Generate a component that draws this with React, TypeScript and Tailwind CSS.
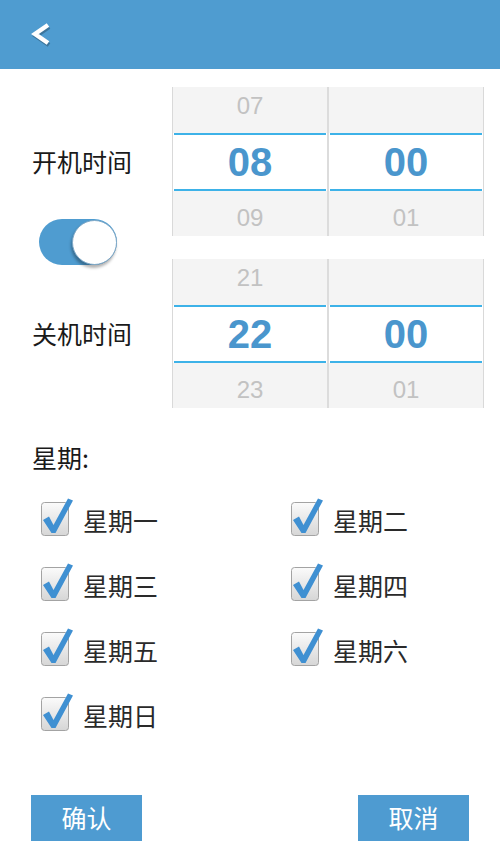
import { useState } from 'react';

const CJK = { fontFamily: '"Noto Sans CJK SC", "Noto Sans", sans-serif' };
const NUM = { fontFamily: '"Liberation Sans", Arial, sans-serif' };

const DAYS = ['星期一', '星期二', '星期三', '星期四', '星期五', '星期六', '星期日'];

const BackArrow = () => (
  <svg width="22" height="24" viewBox="0 0 22 24" className="drop-shadow-[1px_2px_0_rgba(0,0,0,0.25)]">
    <path d="M18 3 L5 12 L18 21" fill="none" stroke="#fff" strokeWidth="4.5" strokeLinejoin="miter" />
  </svg>
);

const CheckIcon = () => (
  <svg width="34" height="40" viewBox="0 0 34 40">
    <defs>
      <linearGradient id="box" x1="0" y1="0" x2="0" y2="1">
        <stop offset="0" stopColor="#fbfbfb" />
        <stop offset="1" stopColor="#d6d6d6" />
      </linearGradient>
    </defs>
    <rect x="1.5" y="5.5" width="27" height="33" rx="3" fill="url(#box)" stroke="#a3a3a3" />
    <path d="M3 23 L9 19.5 L13.5 28 L28 1.5 L33 3.5 L15.5 36 L11.5 36 Z" fill="#3f90d2" />
  </svg>
);

type ColumnProps = { top: string; mid: string; bottom: string };

const Column = ({ top, mid, bottom }: ColumnProps) => (
  <div className="flex flex-col flex-1">
    <div className="h-[46px] bg-[#f4f4f4] flex items-center justify-center pb-[8px] text-[24px] text-[#c2c2c2]" style={NUM}>
      {top}
    </div>
    <div className="h-[2px] bg-[#3db2e8] mx-px" />
    <div className="h-[54px] bg-white flex items-center justify-center text-[40px] font-bold text-[#4a96cd]" style={NUM}>
      {mid}
    </div>
    <div className="h-[2px] bg-[#3db2e8] mx-px" />
    <div className="h-[45px] bg-[#f4f4f4] flex items-center justify-center pt-[8px] text-[24px] text-[#c2c2c2]" style={NUM}>
      {bottom}
    </div>
  </div>
);

const Picker = ({ hour }: { hour: [string, string, string] }) => (
  <div className="flex w-[312px] border-x border-[#d9d9d9]">
    <Column top={hour[0]} mid={hour[1]} bottom={hour[2]} />
    <div className="w-[2px] bg-[#dcdcdc]" />
    <Column top="" mid="00" bottom="01" />
  </div>
);

export default function App() {
  const [on, setOn] = useState(true);

  return (
    <div className="w-[500px] h-[857px] bg-white flex flex-col overflow-hidden" style={CJK}>
      <header className="h-[69px] bg-[#4f9cd0] flex items-center pl-[30px] pb-[2px]">
        <BackArrow />
      </header>

      <section className="flex pt-[18px]">
        <div className="w-[172px] flex flex-col">
          <div className="h-[148px] flex items-center pl-[32px] text-[25px] text-[#1a1a1a] pt-[2px]">开机时间</div>
          <div className="h-0 relative">
            <button
              onClick={() => setOn(!on)}
              className="absolute left-[39px] top-[-16px] w-[78px] h-[46px] rounded-full bg-[#4f9cd0] flex items-center justify-end"
            >
              <span className="w-[45px] h-[45px] rounded-full bg-white border border-[#7fa9c8] shadow-[-1px_3px_3px_rgba(0,0,0,0.3)]" />
            </button>
          </div>
          <div className="h-[23px]" />
          <div className="h-[149px] flex items-center pl-[32px] text-[25px] text-[#1a1a1a] pt-[2px]">关机时间</div>
        </div>
        <div className="flex flex-col gap-[23px]">
          <Picker hour={['07', '08', '09']} />
          <Picker hour={['21', '22', '23']} />
        </div>
      </section>

      <div className="pl-[32px] pt-[33px] text-[25px] text-[#1a1a1a] leading-[32px]">星期:</div>

      <div className="grid grid-cols-[250px_1fr] pt-[24px] pl-[40px]">
        {DAYS.map((d) => (
          <div key={d} className="h-[65px] flex items-start gap-[9px]">
            <CheckIcon />
            <span className="text-[25px] text-[#2a2a2a] leading-[32px] pt-[7px]">{d}</span>
          </div>
        ))}
      </div>

      <div className="flex justify-between px-[31px] mt-auto mb-[16px]">
        <button className="w-[111px] h-[46px] bg-[#4e9bd1] text-white text-[25px]">确认</button>
        <button className="w-[111px] h-[46px] bg-[#4e9bd1] text-white text-[25px]">取消</button>
      </div>
    </div>
  );
}
